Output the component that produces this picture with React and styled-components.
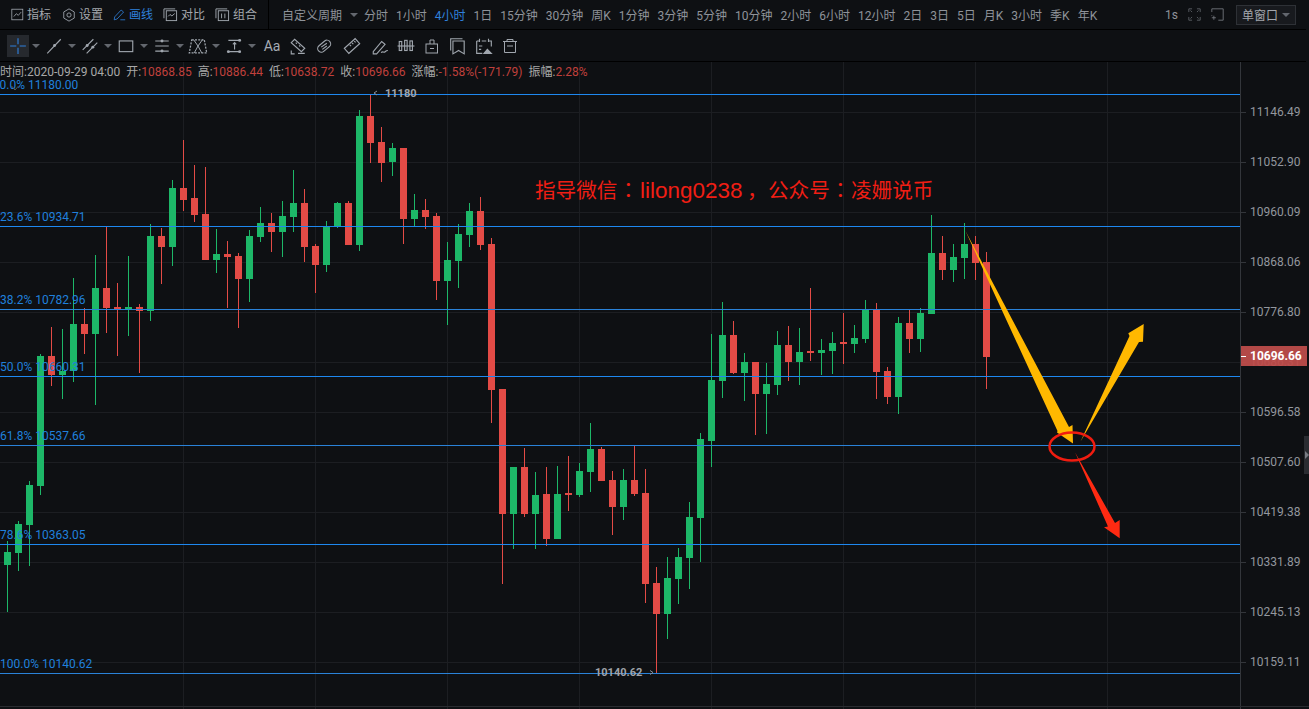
import React from 'react';
import styled, { createGlobalStyle } from 'styled-components';

const GlobalStyle = createGlobalStyle`
  html, body {
    margin: 0;
    padding: 0;
    height: 100%;
    overflow: hidden;
    background: #0e1013;
  }
  body {
    font-family: Roboto, "Noto Sans CJK SC", sans-serif;
    font-size: 12px;
    color: #9a9ea5;
  }
`;

const Page = styled.div`
  width: 1309px;
  height: 709px;
  display: flex;
  flex-direction: column;
  background: #0e1013;
  overflow: hidden;
  position: relative;
`;

const TopBar = styled.div`
  height: 30px;
  display: flex;
  align-items: center;
  flex: none;
  width: 1306px;
  box-sizing: border-box;
  border-bottom: 1px solid #000;
`;

const MenuGroup = styled.div`
  display: flex;
  align-items: center;
  height: 100%;
  width: 269px;
  flex: none;
  padding-left: 11px;
  box-sizing: border-box;
  border-right: 1px solid #000;
`;

const MenuItem = styled.div`
  display: flex;
  align-items: center;
  width: ${p => p.$w}px;
  flex: none;
  gap: 3px;
  color: ${p => (p.$active ? '#2f80dc' : '#a3a7ad')};
  font-size: 12px;
  line-height: 16px;
  white-space: nowrap;
`;

const PeriodList = styled.div`
  display: flex;
  align-items: center;
  gap: 8px;
  padding-left: 13px;
  flex: none;
`;

const Period = styled.span`
  color: ${p => (p.$active ? '#2f80dc' : '#8f939a')};
  font-size: 12px;
  white-space: nowrap;
`;

const Caret = styled.i`
  display: inline-block;
  width: 0;
  height: 0;
  border-left: 4px solid transparent;
  border-right: 4px solid transparent;
  border-top: 4px solid ${p => p.$color || '#63676e'};
`;

const PeriodCaret = styled(Caret)`
  margin-right: -2px;
`;

const RightTools = styled.div`
  margin-left: auto;
  display: flex;
  align-items: center;
  padding-right: 10px;
  gap: 10px;
  flex: none;
`;

const WindowButton = styled.div`
  width: 60px;
  height: 20px;
  box-sizing: border-box;
  margin-left: 2px;
  display: flex;
  align-items: center;
  justify-content: center;
  gap: 4px;
  border: 1px solid #2e3136;
  background: #181a1e;
  color: #a3a7ad;
`;

const DrawBar = styled.div`
  height: 32px;
  width: 1306px;
  flex: none;
  box-sizing: border-box;
  display: flex;
  align-items: center;
  padding-left: 7px;
  border-bottom: 1px solid #000;
`;

const Tool = styled.div`
  width: ${p => p.$w || 26}px;
  height: 22px;
  flex: none;
  display: flex;
  align-items: center;
  justify-content: center;
  background: ${p => (p.$active ? '#26292e' : 'transparent')};
  color: #a5abb3;
  font-size: 14px;
`;

const CaretSlot = styled.div`
  width: 14px;
  flex: none;
  display: flex;
  justify-content: center;
`;

const ChartRow = styled.div`
  flex: 1;
  display: flex;
  min-height: 0;
  position: relative;
`;

const Plot = styled.div`
  width: 1240px;
  flex: none;
  position: relative;
`;

const ChartSvg = styled.svg`
  display: block;
  width: 1240px;
  height: 647px;
`;

const InfoLine = styled.div`
  position: absolute;
  left: 0;
  top: 2px;
  display: flex;
  gap: 6px;
  font-size: 12px;
  line-height: 16px;
  color: #a8a8a8;
  white-space: nowrap;
`;

const InfoValue = styled.span`
  color: #c0403c;
`;

const FibLabel = styled.text`
  font-family: Roboto, sans-serif;
  font-size: 12px;
  fill: #2080dc;
`;

const ExtremeLabel = styled.text`
  font-family: Roboto, sans-serif;
  font-size: 11px;
  font-weight: 700;
  fill: #a0a4aa;
`;

const Promo = styled.text`
  font-family: "Noto Sans CJK SC", sans-serif;
  font-size: 20.6px;
  fill: #f01e14;
`;

const PromoLatin = styled.tspan`
  font-family: "Liberation Sans", sans-serif;
  font-size: 22.5px;
`;

const PromoColon = styled.tspan`
  font-family: "Noto Sans CJK TC", sans-serif;
`;

const Axis = styled.div`
  flex: 1;
  position: relative;
  border-left: 1px solid #33363b;
  padding-top: 25px;
  box-sizing: border-box;
`;

const AxisRow = styled.div`
  height: 50px;
  display: flex;
  align-items: center;
  gap: 4px;
  color: #93979e;
  font-size: 12px;
`;

const Tick = styled.span`
  width: 5px;
  height: 1px;
  flex: none;
  background: ${p => p.$color || '#33363b'};
`;

const PriceTag = styled.div`
  position: absolute;
  left: 0;
  top: 284px;
  width: 66px;
  height: 20px;
  display: flex;
  align-items: center;
  gap: 4px;
  background: rgba(190, 77, 74, 0.94);
  color: #fff;
  font-weight: 700;
  font-size: 12px;
`;

const SideHandle = styled.div`
  position: absolute;
  right: 0;
  top: 374px;
  width: 5px;
  height: 38px;
  background: #2a2c31;
  display: flex;
  align-items: center;
  justify-content: flex-end;

  &::after {
    content: '';
    border-left: 4px solid #777b82;
    border-top: 4px solid transparent;
    border-bottom: 4px solid transparent;
  }
`;

const BottomRule = styled.div`
  position: absolute;
  left: 0;
  right: 0;
  bottom: 2px;
  height: 1px;
  background: #2a2c30;
`;

const Icon = ({ size = 14, box = 16, color = '#a0a6ae', children }) => (
  <svg width={size} height={size} viewBox={`0 0 ${box} ${box}`} fill="none" stroke={color} strokeWidth="1">
    {children}
  </svg>
);

const menu = [
  {
    label: '指标',
    w: 51,
    icon: (
      <Icon size={13}>
        <rect x="1" y="1.5" width="13.5" height="13" />
        <path d="M3.5 10.5l3-3.5 2.5 2 3.5-4" />
      </Icon>
    ),
  },
  {
    label: '设置',
    w: 51,
    icon: (
      <Icon size={14}>
        <path d="M8 1l6 3.5v7L8 15l-6-3.5v-7z" />
        <circle cx="8" cy="8" r="2.4" />
      </Icon>
    ),
  },
  {
    label: '画线',
    w: 50,
    active: true,
    icon: (
      <Icon size={13} color="#2f80dc">
        <path d="M2 11l8-8.5 3 2.5-8 8.5-3.5 1z" />
        <path d="M9 14.5h6" />
      </Icon>
    ),
  },
  {
    label: '对比',
    w: 52,
    icon: (
      <Icon size={15}>
        <path d="M1 12V2h12" />
        <rect x="3.5" y="4" width="11" height="10.5" />
        <path d="M5.5 10l2-2 2 1.5 3-2.5" />
      </Icon>
    ),
  },
  {
    label: '组合',
    w: 50,
    icon: (
      <Icon size={15}>
        <path d="M1 12V2h12" />
        <rect x="3.5" y="4" width="11" height="10.5" />
        <path d="M7 7v5M10.5 7v5" />
      </Icon>
    ),
  },
];

const periods = [
  '分时', '1小时', '4小时', '1日', '15分钟', '30分钟', '周K', '1分钟', '3分钟', '5分钟', '10分钟',
  '2小时', '6小时', '12小时', '2日', '3日', '5日', '月K', '3小时', '季K', '年K',
];

const Dot = ({ x, y }) => <circle cx={x} cy={y} r="1.3" fill="#a0a6ae" stroke="none" />;

const caretTools = [
  <Icon size={18} color="#2f80dc" key="cross"><path d="M8 1v5.5M8 9.5V15M1 8h5.5M9.5 8H15" /></Icon>,
  <Icon size={18} key="trend"><path d="M2 14.5L14 2" /><Dot x={8.5} y={7.5} /></Icon>,
  <Icon size={18} key="channel"><path d="M1.5 11.5L11 2M5 14.5L14.5 5" /><Dot x={5.5} y={7.5} /><Dot x={10.5} y={9} /></Icon>,
  <Icon size={18} key="rect"><rect x="2" y="3.5" width="12" height="9.5" /></Icon>,
  <Icon size={18} key="fib"><path d="M2 3.5h12M2 8h12M2 12.5h12" /><Dot x={8} y={3.5} /><Dot x={8} y={12.5} /></Icon>,
  <Icon size={20} key="pattern"><path d="M3 3h10l2 10.5H1z" strokeDasharray="1.6 1" /><path d="M4.5 3L8 8l3.5-5M5 13.5L8 8l3 5.5" strokeWidth="0.8" /></Icon>,
  <Icon size={18} key="span"><path d="M3 3h11M3 13h11M8.5 11V5M7 6.5L8.5 5l1.5 1.5" /><Dot x={13} y={3} /><Dot x={3} y={13} /><Dot x={13} y={13} /></Icon>,
];

const plainTools = [
  { key: 'text', node: 'Aa' },
  { key: 'group', node: <Icon size={18}><path d="M2 5l3-3 9 8-3 3z" /><path d="M6 5l1 1M9 7.5l1 1M2 12v3h3M8 14.5h6" /></Icon> },
  { key: 'link', node: <Icon size={18}><rect x="1.5" y="5" width="13" height="6.5" rx="3.2" transform="rotate(-40 8 8)" /><path d="M5.5 9l5-3.5M6.5 11l4-3" /></Icon> },
  { key: 'ruler', w: 30, node: <Icon size={18}><rect x="1.5" y="5" width="13" height="6" transform="rotate(-42 8 8)" /><path d="M6 7l1.2 1.2M8 5.2l1.2 1.2M10 3.6l1.2 1.2" /></Icon> },
  { key: 'pen', node: <Icon size={18}><path d="M2 13l7.5-9 3 2.5-7.5 8.5H2z" /><path d="M9 14c1.5-2 2 0 3-.5s1-1.5 3-1.5" /></Icon> },
  { key: 'bars', node: <Icon size={18}><path d="M0.5 8h15" /><rect x="2" y="4" width="2.2" height="8" /><rect x="6.8" y="3" width="2.2" height="9" /><rect x="11.5" y="3.5" width="2.2" height="8.5" /></Icon> },
  { key: 'lock', node: <Icon size={16}><rect x="2" y="6" width="11.5" height="9" /><path d="M6 6V2h4v4M6 10.5h4" /></Icon> },
  { key: 'mark', node: <Icon size={18}><path d="M1.5 12V1.5H12" /><path d="M3.5 3.5h10v11.5l-5-3-5 3z" /></Icon> },
  { key: 'shot', node: <Icon size={18}><path d="M1.5 3.5v11h5M1.5 3.5h2M6 3.5h4M12.5 3.5h2v5M4 1.5v3M12 1.5v3M3.5 8h3M3.5 11h2" /><path d="M8 14.5l3-3.5 3.5 3.5z" fill="#a0a6ae" /></Icon> },
  { key: 'trash', node: <Icon size={16}><path d="M1 3.5h14M5 3.5V1.5h6v2M2.5 3.5v11h11v-11M5 8h6" /></Icon> },
];

const info = [
  ['时间:2020-09-29 04:00', ''],
  ['开:', '10868.85'],
  ['高:', '10886.44'],
  ['低:', '10638.72'],
  ['收:', '10696.66'],
  ['涨幅:', '-1.58%(-171.79)'],
  ['振幅:', '2.28%'],
];

const axisLabels = [
  '11146.49', '11052.90', '10960.09', '10868.06', '10776.80', '10686.31',
  '10596.58', '10507.60', '10419.38', '10331.89', '10245.13', '10159.11',
];

const gridYs = [112, 162, 212, 262, 312, 362, 412, 462, 512, 562, 612, 662];
const gridXs = [183, 315, 447, 579, 711, 843, 975, 1107];

const fibs = [
  { y: 94, label: '0.0% 11180.00', ly: 89, color: '#1e88f0' },
  { y: 226, label: '23.6% 10934.71', ly: 221, color: '#1e88f0' },
  { y: 309, label: '38.2% 10782.96', ly: 304, color: '#2a82d8' },
  { y: 376, label: '50.0% 10660.31', ly: 371, color: '#1e88f0' },
  { y: 445, label: '61.8% 10537.66', ly: 440, color: '#2a82d8' },
  { y: 544, label: '78.6% 10363.05', ly: 539, color: '#1e88f0' },
  { y: 673, label: '100.0% 10140.62', ly: 668, color: '#2a82d8' },
];

// [colour, wick top, body top, body bottom, wick bottom], one candle every 11px from x=7
const candles = [
  ['g', 541, 552, 565, 612], ['g', 521, 524, 553, 571], ['g', 481, 485, 525, 566], ['g', 354, 356, 486, 495],
  ['r', 327, 356, 375, 386], ['g', 329, 371, 375, 399], ['g', 278, 324, 371, 382], ['r', 308, 324, 334, 354],
  ['g', 255, 288, 334, 405], ['r', 227, 288, 308, 333], ['r', 283, 307, 309, 356], ['g', 256, 307, 309, 336],
  ['r', 304, 307, 311, 373], ['g', 224, 236, 311, 321], ['r', 228, 236, 247, 284], ['g', 180, 188, 247, 266],
  ['r', 140, 188, 200, 211], ['r', 165, 198, 215, 222], ['r', 167, 214, 260, 260], ['g', 229, 254, 260, 273],
  ['r', 241, 254, 257, 308], ['r', 253, 256, 279, 328], ['g', 230, 236, 279, 302], ['g', 207, 223, 237, 242],
  ['r', 213, 223, 232, 252], ['g', 201, 216, 232, 257], ['g', 170, 203, 217, 232], ['r', 189, 203, 247, 262],
  ['r', 244, 246, 265, 293], ['g', 221, 227, 265, 272], ['g', 202, 203, 226, 228], ['r', 201, 203, 245, 245],
  ['g', 110, 116, 245, 251], ['r', 95, 116, 143, 163], ['r', 127, 142, 163, 182], ['g', 143, 148, 162, 176],
  ['r', 148, 148, 219, 244], ['g', 194, 210, 219, 226], ['r', 199, 210, 217, 229], ['r', 213, 216, 281, 300],
  ['g', 242, 260, 281, 325], ['g', 224, 234, 261, 288], ['g', 203, 211, 235, 247], ['r', 197, 211, 245, 250],
  ['r', 238, 244, 390, 423], ['r', 389, 389, 514, 584], ['g', 467, 467, 514, 549], ['r', 448, 467, 514, 517],
  ['g', 472, 495, 514, 549], ['r', 467, 494, 539, 546], ['g', 466, 494, 539, 539], ['r', 456, 493, 495, 511],
  ['g', 463, 471, 495, 497], ['g', 423, 449, 472, 492], ['r', 447, 449, 481, 481], ['r', 471, 480, 507, 535],
  ['g', 469, 480, 507, 520], ['r', 446, 480, 494, 496], ['r', 469, 493, 584, 603], ['r', 567, 583, 614, 673],
  ['g', 557, 578, 614, 639], ['g', 548, 557, 579, 604], ['g', 502, 517, 558, 589], ['g', 433, 439, 518, 562],
  ['g', 334, 380, 441, 467], ['g', 302, 335, 381, 398], ['r', 321, 335, 373, 374], ['g', 353, 362, 373, 401],
  ['r', 362, 362, 394, 435], ['g', 363, 384, 394, 434], ['g', 331, 345, 385, 395], ['r', 326, 345, 362, 381],
  ['g', 328, 352, 362, 385], ['r', 288, 351, 353, 361], ['g', 339, 350, 353, 375], ['g', 332, 343, 351, 374],
  ['r', 313, 342, 344, 364], ['g', 325, 338, 344, 353], ['g', 300, 310, 339, 343], ['r', 303, 310, 372, 399],
  ['r', 367, 371, 397, 404], ['g', 317, 323, 397, 414], ['r', 310, 323, 339, 353], ['g', 308, 313, 339, 352],
  ['g', 215, 253, 314, 314], ['r', 236, 253, 270, 280], ['g', 244, 257, 270, 282], ['g', 223, 244, 258, 279],
  ['r', 236, 244, 263, 280], ['r', 252, 262, 357, 389],
];

const CANDLE_COLORS = { g: '#1db768', r: '#e34b46' };

function Candles() {
  return candles.map(([c, high, top, bottom, low], i) => {
    const x = 7 + 11 * i;
    return (
      <g key={x} fill={CANDLE_COLORS[c]}>
        <rect x={x} y={high} width="1" height={low - high} />
        <rect x={x - 3} y={top} width="7" height={Math.max(bottom - top, 2)} />
      </g>
    );
  });
}

function Chart() {
  return (
    <ChartSvg viewBox="0 62 1240 647">
      <g shapeRendering="crispEdges">
        {gridYs.map(y => <rect key={y} x="0" y={y} width="1240" height="1" fill="#1c1e22" />)}
        {gridXs.map(x => <rect key={x} x={x} y="62" width="1" height="647" fill="#1c1e22" />)}
        <Candles />
        {fibs.map(f => <rect key={f.y} x="0" y={f.y} width="1240" height="1" fill={f.color} />)}
      </g>
      {fibs.map(f => <FibLabel key={f.label} x={f.y === 94 ? -0.5 : 0} y={f.ly}>{f.label}</FibLabel>)}
      <path d="M11.5 86l3.5 4 3.5-4" fill="none" stroke="#55585e" strokeWidth="1" />

      <path d="M377 91l-3 2 3 2" fill="none" stroke="#8b8f96" strokeWidth="1" />
      <ExtremeLabel x="385" y="97">11180</ExtremeLabel>
      <ExtremeLabel x="595" y="676">10140.62</ExtremeLabel>
      <path d="M650 670.5l3 2-3 2" fill="none" stroke="#8b8f96" strokeWidth="1" />

      <Promo y="197.5">
        <tspan x="535">指导微信</tspan>
        <PromoColon x="618">：</PromoColon>
        <PromoLatin x="640">lilong0238</PromoLatin>
        <tspan x="747">，</tspan>
        <tspan x="768">公众号</tspan>
        <PromoColon x="830">：</PromoColon>
        <tspan x="851">凌姗说币</tspan>
      </Promo>

      <polygon points="965.5,231 1069,427 1072.5,425 1073,443.5 1057,432.5 1057.5,431" fill="#ffb800" />
      <polygon points="1080.5,441.5 1129.5,336 1128.3,333.3 1143.7,324 1143,341.7 1139,342" fill="#ffb800" />
      <polygon points="1075,452.3 1115,523 1119.7,520 1119.7,538.3 1104,527.3 1108,526.5" fill="#ff2a12" />
      <ellipse cx="1072" cy="446.5" rx="22.5" ry="14" fill="none" stroke="#f01c10" strokeWidth="2.5" />
    </ChartSvg>
  );
}

export default function App() {
  return (
    <Page>
      <GlobalStyle />
      <TopBar>
        <MenuGroup>
          {menu.map(m => (
            <MenuItem key={m.label} $w={m.w} $active={m.active}>
              {m.icon}
              {m.label}
            </MenuItem>
          ))}
        </MenuGroup>
        <PeriodList>
          <Period>自定义周期</Period>
          <PeriodCaret />
          {periods.map(p => <Period key={p} $active={p === '4小时'}>{p}</Period>)}
        </PeriodList>
        <RightTools>
          <Period>1s</Period>
          <Icon size={13} color="#63676e"><path d="M1 5V1h4M11 1h4v4M15 11v4h-4M5 15H1v-4M3 3l2 2M13 3l-2 2M3 13l2-2M13 13l-2-2" /></Icon>
          <Icon size={13} color="#7b7f86"><path d="M1 5V1h14v14H9M1 9v1M1 12h5M3.5 9.5v5" /></Icon>
          <WindowButton>单窗口<Caret /></WindowButton>
        </RightTools>
      </TopBar>
      <DrawBar>
        {caretTools.map((icon, i) => (
          <React.Fragment key={icon.key}>
            <Tool $w={22} $active={i === 0}>{icon}</Tool>
            <CaretSlot><Caret /></CaretSlot>
          </React.Fragment>
        ))}
        {plainTools.map(t => <Tool key={t.key} $w={t.w}>{t.node}</Tool>)}
      </DrawBar>
      <ChartRow>
        <Plot>
          <Chart />
          <InfoLine>
            {info.map(([name, value]) => (
              <span key={name}>{name}<InfoValue>{value}</InfoValue></span>
            ))}
          </InfoLine>
        </Plot>
        <Axis>
          {axisLabels.map(label => (
            <AxisRow key={label}><Tick />{label}</AxisRow>
          ))}
          <PriceTag><Tick $color="#fff" />10696.66</PriceTag>
          <SideHandle />
        </Axis>
        <BottomRule />
      </ChartRow>
    </Page>
  );
}
